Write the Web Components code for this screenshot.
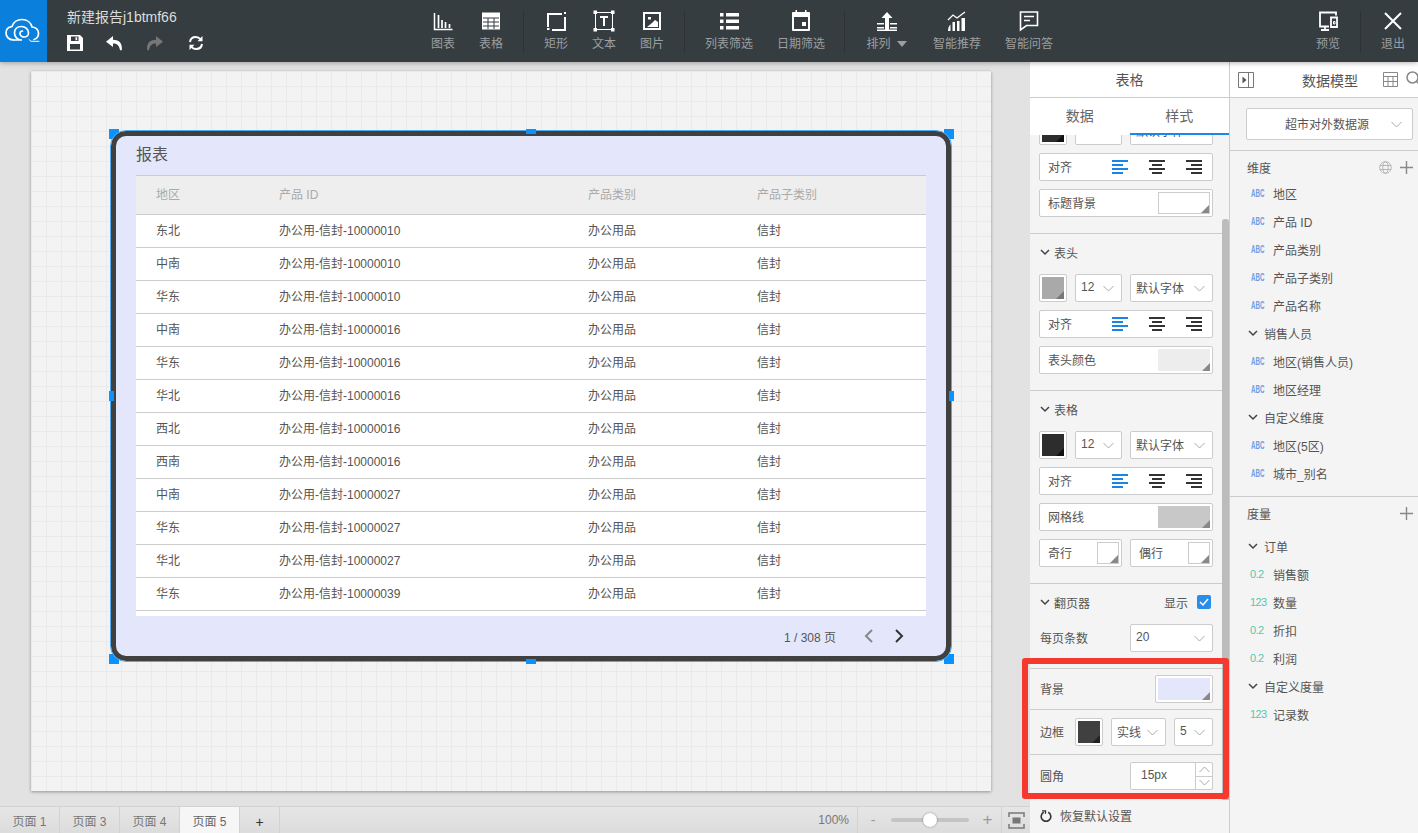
<!DOCTYPE html>
<html lang="zh">
<head>
<meta charset="utf-8">
<title>新建报告</title>
<style>
    html, body { margin: 0; height: 100%; overflow: hidden; }
    body {
        font-family: "Liberation Sans", "Noto Sans CJK SC", sans-serif;
        font-size: 12px;
        color: #555;
    }
</style>
</head>
<body>
<rp-app></rp-app>

<script>
const ICONS = {
    logo: `<svg width="47" height="62" viewBox="0 0 47 62" fill="none" stroke="#fff" stroke-width="1.7" stroke-linecap="round"><path d="M14 40C9 40 6 37 6 33 6 29.500 8.500 27 12 26.500 13.500 22 17.500 19.500 22 19.500 27 19.500 31 22.500 32 27 36 27.500 38.500 30 38.500 33.500 38.500 36 37 38.500 34 39.500"/><path d="M14 40h8C17 40 14.500 36.500 14.500 33 14.500 29 17.500 26.500 21.500 26.500 25.500 26.500 28.500 29.500 28.500 33 28.500 35.500 26.500 37 24.500 37 22 37 20 35.500 20 33.500 20 32 21 31 22.500 31"/><path d="M29 39.500l2 1.800h8" stroke-width="1"/></svg>`,
    save: `<svg width="16" height="16" viewBox="0 0 16 16"><path fill="#fff" fill-rule="evenodd" d="M0 0h13l3 3v13H0zM4 1.500v4.500h7.500V1.500zM8.500 2.300h1.700v3H8.500zM3 9v5.500h10V9z"/></svg>`,
    undo: `<svg width="16" height="16" viewBox="0 0 16 16"><path fill="currentColor" d="M7 1L0 6.800 7 12V8.500c4 0 6 1.500 7 6.500.4.400 1.500.4 1.800 0C16.500 8 13 4.700 7 4.700z"/></svg>`,
    redo: `<svg width="16" height="16" viewBox="0 0 16 16"><path fill="currentColor" d="M9 1l7 5.800L9 12V8.500c-4 0-6 1.500-7 6.500-.4.400-1.500.4-1.800 0C-.5 8 3 4.700 9 4.700z"/></svg>`,
    refresh: `<svg width="16" height="16" viewBox="0 0 16 16" fill="none" stroke="#fff" stroke-width="2"><path d="M2 7c.4-3 2.800-5 5.800-5 1.900 0 3.500.8 4.700 2.200"/><path d="M14 9c-.4 3-2.800 5-5.800 5-1.900 0-3.500-.8-4.700-2.200"/><path d="M14.500 1v5.200H9.500L14.500 1zM1.500 15V9.800h5L1.500 15z" fill="#fff" stroke="none"/></svg>`,
    chart: `<svg width="24" height="24" viewBox="0 0 24 24" fill="none" stroke="#fff"><path d="M3.500 4v16.500h18" stroke-width="1.500"/><path d="M7.500 6v13M11 11v8M14.500 13v6M18.500 15v4" stroke-width="1.700"/></svg>`,
    table: `<svg width="24" height="24" viewBox="0 0 24 24"><path fill="#fff" d="M3 3.500h18v17H3z"/><path stroke="#363d40" d="M4 9h16M4 13h16M4 17h16M9 9v11M15 9v11" fill="none"/></svg>`,
    rect: `<svg width="24" height="24" viewBox="0 0 24 24" fill="none" stroke="#fff" stroke-width="2"><path d="M4 18V5h14M21 8v13H8M3 20h2.500M20 4h2"/></svg>`,
    text: `<svg width="24" height="24" viewBox="0 0 24 24" fill="none" stroke="#fff"><path d="M3.500 3.500h17v17h-17z"/><path d="M1.500 1.500h3.500v3.500H1.500zM19 1.500h3.500v3.500H19zM1.500 19h3.500v3.500H1.500zM19 19h3.500v3.500H19z" fill="#fff" stroke="none"/><path d="M8 8h8M12 8v9" stroke-width="2"/></svg>`,
    image: `<svg width="24" height="24" viewBox="0 0 24 24"><path fill="#fff" fill-rule="evenodd" d="M3 3h18v18H3zM5 5v14h14V5z"/><path fill="#fff" d="M7 18l5-4 3-3 3 2v5z"/><path fill="#fff" d="M8 8h3v2.500H8z"/></svg>`,
    list: `<svg width="24" height="24" viewBox="0 0 24 24" fill="#fff"><path d="M3 4h3.500v3.500H3zM9 4h13v3.500H9zM3 10.500h3.500V14H3zM9 10.500h13V14H9zM3 17h3.500v3.500H3zM9 17h13v3.500H9z"/></svg>`,
    date: `<svg width="24" height="24" viewBox="0 0 24 24"><path fill="#fff" fill-rule="evenodd" d="M4 3h2.500V1H8v2h8V1h1.500v2H20a1 1 0 0 1 1 1v17a1 1 0 0 1-1 1H4a1 1 0 0 1-1-1V4a1 1 0 0 1 1-1zM5 8v12h14V8z"/><path fill="#fff" d="M13 13h4v4h-4z"/></svg>`,
    sort: `<svg width="24" height="24" viewBox="0 0 24 24" fill="#fff"><path d="M12 3l5.500 6H14v4h-4V9H6.500z"/><path d="M2 14h7v1.500H2zM15 14h7v1.500h-7zM2 18h7v1.500H2zM15 18h7v1.500h-7zM10 13h4v8h-4zM2 20.500h20V22H2z"/></svg>`,
    recommend: `<svg width="24" height="24" viewBox="0 0 24 24"><path d="M3 11l5-5 4 3 8-6" fill="none" stroke="#fff" stroke-width="1.300"/><path fill="#fff" d="M3 22c0-3 .8-5 2.500-6.500V22zM7.500 22v-9H10v9zM12 22v-10h2.500v10zM16.500 22V9H20v13z"/></svg>`,
    qa: `<svg width="24" height="24" viewBox="0 0 24 24" fill="none" stroke="#fff" stroke-width="1.600"><path d="M3.500 3h17v13.500H9.500l-6 4.500z"/><path d="M7 7.500h10M7 11.500h6"/></svg>`,
    preview: `<svg width="24" height="24" viewBox="0 0 24 24" fill="none" stroke="#fff" stroke-width="1.800"><path d="M13 17.500H4V3.500h16v3"/><path d="M5 21h8M9 17.500V21"/><path d="M15 8.500h6v9.500h-6z"/><path d="M17.500 12.500h1.500v2.500h-1.500z" stroke-width="1"/></svg>`,
    close: `<svg width="24" height="24" viewBox="0 0 24 24" fill="none" stroke="#fff" stroke-width="2"><path d="M4 4l16 16M20 4L4 20"/></svg>`,
    chevron: `<svg width="11" height="7" viewBox="0 0 11 7" fill="none" stroke="#aaa"><path d="M.5 1l5 5 5-5"/></svg>`,
    chevronBold: `<svg width="10" height="7" viewBox="0 0 10 7" fill="none" stroke="#444" stroke-width="1.500"><path d="M1 1l4 4 4-4"/></svg>`,
    left: `<svg width="16" height="16" viewBox="0 0 16 16" fill="none" stroke="#888" stroke-width="2"><path d="M11 2L5 8l6 6"/></svg>`,
    right: `<svg width="16" height="16" viewBox="0 0 16 16" fill="none" stroke="#333" stroke-width="2"><path d="M5 2l6 6-6 6"/></svg>`,
    collapse: `<svg width="16" height="16" viewBox="0 0 16 16" fill="none" stroke="#777"><path d="M.5.500h15v15H.5zM10.500.500v15"/><path d="M4.500 4.500L8.500 8l-4 3.500z" fill="#555" stroke="none"/></svg>`,
    grid: `<svg width="15" height="15" viewBox="0 0 15 15" fill="none" stroke="#888"><path d="M.5.500h14v14H.5zM.5 4.500h14M.5 9.500h14M5 4.500v10M10 4.500v10"/></svg>`,
    search: `<svg width="18" height="18" viewBox="0 0 18 18" fill="none" stroke="#888" stroke-width="1.500"><circle cx="6.500" cy="6.500" r="5.500"/><path d="M10.500 10.500l5 5"/></svg>`,
    globe: `<svg width="13" height="13" viewBox="0 0 13 13" fill="none" stroke="#aaa" stroke-width=".8"><circle cx="6.500" cy="6.500" r="5.800"/><ellipse cx="6.500" cy="6.500" rx="2.700" ry="5.800"/><path d="M1 4.500h11M1 8.500h11"/></svg>`,
    plus: `<svg width="13" height="13" viewBox="0 0 13 13" fill="none" stroke="#888" stroke-width="1.400"><path d="M6.500 0v13M0 6.500h13"/></svg>`,
    reset: `<svg width="12" height="12" viewBox="0 0 12 12" fill="none" stroke="#333" stroke-width="1.600"><path d="M3.800 2.300A4.800 4.800 0 1 0 8.200 2.300"/><path d="M2 .8h3.500v3" stroke-width="1.300"/></svg>`,
    fit: `<svg width="17" height="17" viewBox="0 0 17 17" fill="none" stroke="#777" stroke-width="1.500"><path d="M1 5V1h15v4M1 12v4h15v-4"/><path d="M4.500 5.500h8v6h-8z" fill="#777" stroke="none"/></svg>`,
};

class RpIcon extends HTMLElement {
    static get observedAttributes() {
        return ["name"];
    }

    constructor() {
        super();
        this.attachShadow({ mode: "open" });
    }

    connectedCallback() {
        this.render();
    }

    attributeChangedCallback() {
        this.render();
    }

    render() {
        const name = this.getAttribute("name");
        this.shadowRoot.innerHTML = `
            <style>
                :host { display: inline-flex; align-items: center; justify-content: center; flex: none; }
                svg { display: block; }
            </style>
            ${ICONS[name] || ""}
        `;
    }
}

class RpTool extends HTMLElement {
    constructor() {
        super();
        this.attachShadow({ mode: "open" });
        this.shadowRoot.innerHTML = `
            <style>
                :host {
                    display: flex;
                    flex-direction: column;
                    align-items: center;
                    width: 48px;
                    height: 62px;
                    padding-top: 9px;
                    box-sizing: border-box;
                    color: #9b9fa1;
                    font-size: 12px;
                    line-height: 16px;
                    flex: none;
                }
                .label { margin-top: 3px; white-space: nowrap; }
            </style>
            <rp-icon name="${this.getAttribute("icon")}"></rp-icon>
            <div class="label"><slot></slot></div>
        `;
    }
}

class RpToolbar extends HTMLElement {
    constructor() {
        super();
        this.attachShadow({ mode: "open" });
        this.shadowRoot.innerHTML = `
            <style>
                :host {
                    display: flex;
                    height: 62px;
                    background: #363d40;
                    box-shadow: 0 1px 5px rgba(0, 0, 0, 0.3);
                    position: relative;
                    z-index: 3;
                    flex: none;
                }
                .logo { width: 47px; background: #0a7fdc; flex: none; }
                .doc { width: 352px; padding: 8px 0 0 20px; flex: none; }
                .title { color: #ddd; font-size: 14px; line-height: 18px; }
                .actions { display: flex; gap: 25px; margin-top: 9px; color: #fff; }
                .actions .save { margin-right: -2px; }
                .actions .off { color: #777; }
                .sep { width: 1px; height: 42px; margin: 11px 8px 0; background: #2c3235; flex: none; }
                .sep.tight { margin: 11px 7px 0; }
                .w72 { width: 72px; }
                .w69 { width: 69px; }
                .end { margin-left: auto; display: flex; padding-right: 1px; }
                .caret { display: inline-block; margin-left: 6px; border: 5px solid transparent; border-top: 6px solid #9b9fa1; border-bottom: 0; vertical-align: 1px; }
            </style>
            <rp-icon class="logo" name="logo"></rp-icon>
            <div class="doc">
                <div class="title">新建报告j1btmf66</div>
                <div class="actions">
                    <rp-icon class="save" name="save"></rp-icon>
                    <rp-icon name="undo"></rp-icon>
                    <rp-icon class="off" name="redo"></rp-icon>
                    <rp-icon name="refresh"></rp-icon>
                </div>
            </div>
            <rp-tool icon="chart">图表</rp-tool>
            <rp-tool icon="table">表格</rp-tool>
            <div class="sep"></div>
            <rp-tool icon="rect">矩形</rp-tool>
            <rp-tool icon="text">文本</rp-tool>
            <rp-tool icon="image">图片</rp-tool>
            <div class="sep"></div>
            <rp-tool class="w72" icon="list">列表筛选</rp-tool>
            <rp-tool class="w72" icon="date">日期筛选</rp-tool>
            <div class="sep tight"></div>
            <rp-tool class="w69" icon="sort">排列<span class="caret"></span></rp-tool>
            <rp-tool class="w72" icon="recommend">智能推荐</rp-tool>
            <rp-tool class="w72" icon="qa">智能问答</rp-tool>
            <div class="end">
                <rp-tool icon="preview">预览</rp-tool>
                <div class="sep"></div>
                <rp-tool icon="close">退出</rp-tool>
            </div>
        `;
    }
}

const REPORT_ROWS = [
    ["东北", "10000010"], ["中南", "10000010"], ["华东", "10000010"], ["中南", "10000016"],
    ["华东", "10000016"], ["华北", "10000016"], ["西北", "10000016"], ["西南", "10000016"],
    ["中南", "10000027"], ["华东", "10000027"], ["华北", "10000027"], ["华东", "10000039"],
];

class RpReport extends HTMLElement {
    constructor() {
        super();
        this.attachShadow({ mode: "open" });
        const rows = REPORT_ROWS.map(
            ([area, id]) => `
                <div class="row">
                    <span>${area}</span>
                    <span>办公用-信封-${id}</span>
                    <span>办公用品</span>
                    <span>信封</span>
                </div>`
        ).join("");
        this.shadowRoot.innerHTML = `
            <style>
                :host {
                    display: flex;
                    flex-direction: column;
                    box-sizing: border-box;
                    width: 840px;
                    height: 530px;
                    padding: 0 20px;
                    background: #e4e7fb;
                    border: 5px solid #404040;
                    border-radius: 15px;
                    outline: 1px solid #55a9ee;
                }
                .title { height: 39px; line-height: 38px; font-size: 16px; color: #555; flex: none; }
                .table { height: 441px; background: #fff; border-top: 1px solid #ccc; box-sizing: border-box; overflow: hidden; flex: none; }
                .row, .head {
                    display: grid;
                    grid-template-columns: 123px 309px 169px 1fr;
                    height: 33px;
                    line-height: 32px;
                    padding-left: 20px;
                    border-bottom: 1px solid #ccc;
                    box-sizing: border-box;
                    color: #555;
                }
                .head { height: 39px; line-height: 38px; background: #eee; color: #aaa; }
                .pager { flex: 1; display: flex; align-items: center; justify-content: flex-end; color: #555; padding-right: 19px; }
                .pager .count { margin-right: 25px; }
                .pager rp-icon + rp-icon { margin-left: 14px; }
            </style>
            <div class="title">报表</div>
            <div class="table">
                <div class="head">
                    <span>地区</span><span>产品 ID</span><span>产品类别</span><span>产品子类别</span>
                </div>
                ${rows}
            </div>
            <div class="pager">
                <span class="count">1 / 308 页</span>
                <rp-icon name="left"></rp-icon>
                <rp-icon name="right"></rp-icon>
            </div>
        `;
    }
}

class RpCanvas extends HTMLElement {
    constructor() {
        super();
        this.attachShadow({ mode: "open" });
        this.shadowRoot.innerHTML = `
            <style>
                :host {
                    display: block;
                    width: 960px;
                    height: 720px;
                    position: relative;
                    background-color: #f3f3f3;
                    background-image:
                        linear-gradient(#eaeaea 1px, transparent 1px),
                        linear-gradient(90deg, #eaeaea 1px, transparent 1px);
                    background-size: 15px 15px;
                    box-shadow: 0 1px 3px rgba(0, 0, 0, 0.35);
                }
                .handle { position: absolute; width: 10px; height: 10px; background: #0a93ff; }
                .handle.h { height: 5px; }
                .handle.v { width: 5px; }
                rp-report { position: absolute; left: 80px; top: 60px; }
            </style>
            <div class="handle" style="left:78px;top:58px"></div>
            <div class="handle" style="left:913px;top:58px"></div>
            <div class="handle" style="left:78px;top:583px"></div>
            <div class="handle" style="left:913px;top:583px"></div>
            <rp-report></rp-report>
            <div class="handle h" style="left:495px;top:58px"></div>
            <div class="handle h" style="left:495px;top:588px"></div>
            <div class="handle v" style="left:78px;top:320px"></div>
            <div class="handle v" style="left:918px;top:320px"></div>
        `;
    }
}

class RpPageBar extends HTMLElement {
    constructor() {
        super();
        this.attachShadow({ mode: "open" });
        this.shadowRoot.innerHTML = `
            <style>
                :host {
                    display: flex;
                    height: 27px;
                    box-sizing: border-box;
                    border-top: 1px solid #d2d2d2;
                    background: linear-gradient(#e6e6e6, #dcdcdc);
                    color: #777;
                    flex: none;
                }
                .tab { width: 60px; box-sizing: border-box; border-right: 1px solid #d2d2d2; text-align: center; line-height: 31px; }
                .tab:first-child { width: 59px; }
                .tab.on { background: #f6f6f6; color: #666; }
                .tab.add { width: 40px; color: #333; font-size: 14px; }
                .zoom { margin-left: auto; display: flex; align-items: center; height: 100%; }
                .pct { width: 57px; padding-right: 8px; box-sizing: border-box; text-align: right; border-right: 1px solid #d2d2d2; line-height: 26px; }
                .minus { width: 33px; padding-right: 3px; box-sizing: border-box; text-align: center; color: #999; font-size: 14px; }
                .slider { width: 78px; height: 4px; background: #c4c4c4; border-radius: 2px; position: relative; }
                .slider i { position: absolute; left: 32px; top: -5px; width: 14px; height: 14px; background: #fff; border-radius: 50%; box-shadow: 0 0 2px rgba(0,0,0,.45); }
                .plus { width: 33px; padding-left: 5px; text-align: center; color: #999; font-size: 17px; border-right: 1px solid #d2d2d2; line-height: 26px; box-sizing: border-box; }
                rp-icon { width: 28px; }
            </style>
            <div class="tab">页面 1</div>
            <div class="tab">页面 3</div>
            <div class="tab">页面 4</div>
            <div class="tab on">页面 5</div>
            <div class="tab add">+</div>
            <div class="zoom">
                <div class="pct">100%</div>
                <div class="minus">-</div>
                <div class="slider"><i></i></div>
                <div class="plus">+</div>
                <rp-icon name="fit"></rp-icon>
            </div>
        `;
    }
}

// box with a border, used by every control in the side panels
const BOX_CSS = `
    box-sizing: border-box;
    height: 28px;
    background: #fff;
    border: 1px solid #ccc;
    border-radius: 2px;
`;

class RpSelect extends HTMLElement {
    constructor() {
        super();
        this.attachShadow({ mode: "open" });
        this.shadowRoot.innerHTML = `
            <style>
                :host {
                    ${BOX_CSS}
                    display: flex;
                    align-items: center;
                    justify-content: space-between;
                    padding: 0 7px 0 5px;
                    color: #555;
                    font-size: 12px;
                }
                span { position: relative; top: -1px; white-space: nowrap; }
            </style>
            <span><slot></slot></span>
            <rp-icon name="chevron"></rp-icon>
        `;
    }
}

class RpSwatch extends HTMLElement {
    constructor() {
        super();
        this.attachShadow({ mode: "open" });
        const color = this.getAttribute("color") || "#fff";
        const corner = this.getAttribute("corner") || "#888";
        this.shadowRoot.innerHTML = `
            <style>
                :host { display: block; box-sizing: border-box; position: relative; flex: none; }
                .fill { position: absolute; inset: 0; background: ${color}; box-sizing: border-box; }
                :host([outlined]) .fill { border: 1px solid #ccc; }
                .fill::after {
                    content: "";
                    position: absolute;
                    right: 0;
                    bottom: 0;
                    border-style: solid;
                    border-width: 0 0 8px 8px;
                    border-color: transparent transparent ${corner} transparent;
                }
            </style>
            <div class="fill"></div>
        `;
    }
}

// square colour button, the small one next to the size selects
class RpColorButton extends HTMLElement {
    constructor() {
        super();
        this.attachShadow({ mode: "open" });
        const color = this.getAttribute("color");
        this.shadowRoot.innerHTML = `
            <style>
                :host { ${BOX_CSS} display: block; width: 28px; padding: 2px; flex: none; }
                rp-swatch { width: 100%; height: 100%; }
            </style>
            <rp-swatch color="${color}" corner="${this.getAttribute("corner") || "#222"}"></rp-swatch>
        `;
    }
}

// label on the left, colour box filling the right end
class RpColorRow extends HTMLElement {
    constructor() {
        super();
        this.attachShadow({ mode: "open" });
        const width = this.getAttribute("swatch-width") || "52";
        const outlined = this.hasAttribute("outlined") ? "outlined" : "";
        this.shadowRoot.innerHTML = `
            <style>
                :host {
                    ${BOX_CSS}
                    display: flex;
                    align-items: center;
                    justify-content: space-between;
                    padding: 2px 2px 2px 8px;
                    color: #555;
                }
                span { position: relative; top: -1px; }
                rp-swatch { width: ${width}px; height: 22px; }
            </style>
            <span><slot></slot></span>
            <rp-swatch color="${this.getAttribute("color")}" ${outlined}></rp-swatch>
        `;
    }
}

class RpAlignRow extends HTMLElement {
    constructor() {
        super();
        this.attachShadow({ mode: "open" });
        this.shadowRoot.innerHTML = `
            <style>
                :host {
                    ${BOX_CSS}
                    display: flex;
                    align-items: center;
                    padding-left: 8px;
                    color: #555;
                }
                span { position: relative; top: -1px; }
                svg { display: block; margin-left: 21px; }
                svg:first-of-type { margin-left: 40px; }
            </style>
            <span>对齐</span>
            <svg width="16" height="14" viewBox="0 0 16 14" stroke="#1a84e4" stroke-width="1.800" fill="none"><path d="M0 1h16M0 5h11M0 9h16M0 13h11"/></svg>
            <svg width="16" height="14" viewBox="0 0 16 14" stroke="#333" stroke-width="1.800" fill="none"><path d="M0 1h16M3 5h10M0 9h16M3 13h10"/></svg>
            <svg width="16" height="14" viewBox="0 0 16 14" stroke="#333" stroke-width="1.800" fill="none"><path d="M0 1h16M5 5h11M0 9h16M5 13h11"/></svg>
        `;
    }
}

class RpStepper extends HTMLElement {
    constructor() {
        super();
        this.attachShadow({ mode: "open" });
        this.shadowRoot.innerHTML = `
            <style>
                :host {
                    ${BOX_CSS}
                    display: flex;
                    align-items: center;
                    width: 83px;
                    padding-left: 10px;
                    color: #555;
                }
                .value { flex: 1; position: relative; top: -1px; }
                .btns { width: 16px; height: 100%; border-left: 1px solid #ccc; display: flex; flex-direction: column; }
                .btns div { flex: 1; display: flex; align-items: center; justify-content: center; }
                .btns div + div { border-top: 1px solid #ccc; }
                .up { transform: scaleY(-1); }
            </style>
            <span class="value"><slot></slot></span>
            <div class="btns">
                <div><rp-icon class="up" name="chevron"></rp-icon></div>
                <div><rp-icon name="chevron"></rp-icon></div>
            </div>
        `;
    }
}

// collapsible head of a panel section
class RpSectionHead extends HTMLElement {
    constructor() {
        super();
        this.attachShadow({ mode: "open" });
        this.shadowRoot.innerHTML = `
            <style>
                :host { display: flex; align-items: center; box-sizing: border-box; height: 40px; padding: 0 0 4px 1px; color: #555; gap: 4px; }
                .end { margin-left: auto; display: flex; align-items: center; gap: 9px; padding-right: 2px; }
            </style>
            <rp-icon name="chevronBold"></rp-icon>
            <span><slot></slot></span>
            <div class="end"><slot name="end"></slot></div>
        `;
    }
}

class RpStylePanel extends HTMLElement {
    constructor() {
        super();
        this.attachShadow({ mode: "open" });
        const fontRow = (color, corner) => `
            <div class="line">
                <rp-color-button color="${color}" corner="${corner}"></rp-color-button>
                <rp-select class="size">12</rp-select>
                <rp-select class="font">默认字体</rp-select>
            </div>`;
        this.shadowRoot.innerHTML = `
            <style>
                :host {
                    display: flex;
                    flex-direction: column;
                    width: 199px;
                    background: #f4f4f4;
                    position: relative;
                    flex: none;
                }
                .title { height: 36px; line-height: 37px; box-sizing: border-box; background: #fff; border-bottom: 1px solid #ccc; text-align: center; font-size: 14px; color: #555; flex: none; }
                .tabs { display: flex; height: 37px; background: #fff; position: relative; z-index: 1; flex: none; }
                .tabs div { flex: 1; text-align: center; line-height: 37px; font-size: 14px; color: #666; box-sizing: border-box; height: 37px; }
                .tabs .on { border-bottom: 2px solid #1a88e8; }
                .scroll { flex: 1; overflow: hidden; min-height: 0; }
                .section { padding: 0 16px 16px 9px; border-bottom: 1px solid #ccc; display: flex; flex-direction: column; gap: 8px; }
                .section.first { margin-top: -18px; }
                rp-section-head { margin-bottom: -8px; }
                .line { display: flex; gap: 8px; align-items: center; }
                .size { width: 47px; flex: none; }
                .font { flex: 1; }
                .half { flex: 1; min-width: 0; }
                .label { color: #555; flex: 1; padding-left: 1px; position: relative; top: -1px; }
                .check { width: 14px; height: 14px; background: #2a8de8; border-radius: 2px; display: block; }
                .flat { padding: 6px 16px 6px 9px; border-bottom: 1px solid #ccc; }
                .flat.mid { padding: 8px 16px 8px 9px; }
                .flat.last { padding: 7px 16px 7px 9px; border-bottom: 0; }
                .bg { width: 58px; height: 28px; flex: none; }
                .foot { height: 33px; box-sizing: border-box; padding: 0 0 2px 10px; display: flex; align-items: center; gap: 8px; color: #555; flex: none; }
                .thumb { position: absolute; right: 0; top: 157px; width: 7px; height: 581px; background: #bcbcbc; border-radius: 3px 3px 0 0; }
                .mark { position: absolute; left: -8px; top: 596px; width: 207px; height: 141px; box-sizing: border-box; border: 6px solid #f5392f; border-radius: 3px; pointer-events: none; }
            </style>
            <div class="title">表格</div>
            <div class="tabs">
                <div>数据</div>
                <div class="on">样式</div>
            </div>
            <div class="scroll">
                <div class="section first">
                    ${fontRow("#2d2d2d", "#111")}
                    <rp-align-row></rp-align-row>
                    <rp-color-row color="#fff" outlined>标题背景</rp-color-row>
                </div>
                <div class="section">
                    <rp-section-head>表头</rp-section-head>
                    ${fontRow("#a9a9a9", "#777")}
                    <rp-align-row></rp-align-row>
                    <rp-color-row color="#ededed">表头颜色</rp-color-row>
                </div>
                <div class="section">
                    <rp-section-head>表格</rp-section-head>
                    ${fontRow("#2d2d2d", "#111")}
                    <rp-align-row></rp-align-row>
                    <rp-color-row color="#c8c8c8">网格线</rp-color-row>
                    <div class="line">
                        <rp-color-row class="half" color="#fff" swatch-width="22" outlined>奇行</rp-color-row>
                        <rp-color-row class="half" color="#fff" swatch-width="22" outlined>偶行</rp-color-row>
                    </div>
                </div>
                <div class="section">
                    <rp-section-head>
                        翻页器
                        <span slot="end">显示</span>
                        <svg slot="end" class="check" viewBox="0 0 14 14" fill="none" stroke="#fff" stroke-width="1.500"><path d="M3 7l3 3 5-6"/></svg>
                    </rp-section-head>
                    <div class="line">
                        <span class="label">每页条数</span>
                        <rp-select style="width:83px">20</rp-select>
                    </div>
                </div>
                <div class="flat line">
                    <span class="label">背景</span>
                    <rp-color-row class="bg" style="padding:2px" color="#e4e7fb" swatch-width="52"></rp-color-row>
                </div>
                <div class="flat mid line">
                    <span class="label" style="flex:none;width:27px">边框</span>
                    <rp-color-button color="#404040" corner="#222"></rp-color-button>
                    <rp-select style="width:55px;flex:none">实线</rp-select>
                    <rp-select style="width:39px;flex:none">5</rp-select>
                </div>
                <div class="flat last line">
                    <span class="label">圆角</span>
                    <rp-stepper>15px</rp-stepper>
                </div>
            </div>
            <div class="foot">
                <rp-icon name="reset"></rp-icon>
                <span>恢复默认设置</span>
            </div>
            <div class="thumb"></div>
            <div class="mark"></div>
        `;
    }
}

class RpField extends HTMLElement {
    constructor() {
        super();
        this.attachShadow({ mode: "open" });
        const type = this.getAttribute("type") || "ABC";
        this.shadowRoot.innerHTML = `
            <style>
                :host { display: flex; align-items: center; height: 28px; color: #555; }
                .type { display: block; width: 43px; padding-left: 21px; box-sizing: border-box; flex: none; white-space: nowrap; }
                .ABC { color: #6c9fe4; font-size: 10px; font-weight: bold; transform: scaleX(.62); transform-origin: 21px 50%; }
                .num { color: #55c8ae; font-size: 11px; letter-spacing: -.6px; padding-left: 20px; }
            </style>
            <span class="type ${type === "ABC" ? "ABC" : "num"}">${type}</span>
            <span><slot></slot></span>
        `;
    }
}

class RpFieldGroup extends HTMLElement {
    constructor() {
        super();
        this.attachShadow({ mode: "open" });
        this.shadowRoot.innerHTML = `
            <style>
                :host { display: flex; align-items: center; gap: 6px; height: 28px; padding-left: 18px; color: #555; }
            </style>
            <rp-icon name="chevronBold"></rp-icon>
            <span><slot></slot></span>
        `;
    }
}

class RpDataPanel extends HTMLElement {
    constructor() {
        super();
        this.attachShadow({ mode: "open" });
        this.shadowRoot.innerHTML = `
            <style>
                :host {
                    display: flex;
                    flex-direction: column;
                    flex: 1;
                    min-width: 0;
                    background: #f4f4f4;
                    border-left: 1px solid #ccc;
                    overflow: hidden;
                }
                .top { display: flex; align-items: center; height: 36px; box-sizing: border-box; background: #fff; border-bottom: 1px solid #ccc; padding-left: 8px; flex: none; white-space: nowrap; }
                .top .name { margin: 1px 25px 0 48px; font-size: 14px; color: #555; }
                .top rp-icon + rp-icon { margin-left: 8px; }
                .source { padding: 10px 5px 10px 16px; border-bottom: 1px solid #ccc; flex: none; }
                .source rp-select { height: 32px; padding: 0 10px 0 38px; }
                .head { display: flex; align-items: center; height: 28px; padding: 4px 5px 0 17px; box-sizing: border-box; color: #555; gap: 8px; }
                .head span { flex: 1; }
                .block { padding-bottom: 9px; border-bottom: 1px solid #ccc; }
                .head.two { height: 35px; padding: 0 5px 2px 17px; }
            </style>
            <div class="top">
                <rp-icon name="collapse"></rp-icon>
                <div class="name">数据模型</div>
                <rp-icon name="grid"></rp-icon>
                <rp-icon name="search"></rp-icon>
            </div>
            <div class="source">
                <rp-select>超市对外数据源</rp-select>
            </div>
            <div class="block">
                <div class="head">
                    <span>维度</span>
                    <rp-icon name="globe"></rp-icon>
                    <rp-icon name="plus"></rp-icon>
                </div>
                <rp-field>地区</rp-field>
                <rp-field>产品 ID</rp-field>
                <rp-field>产品类别</rp-field>
                <rp-field>产品子类别</rp-field>
                <rp-field>产品名称</rp-field>
                <rp-field-group>销售人员</rp-field-group>
                <rp-field>地区(销售人员)</rp-field>
                <rp-field>地区经理</rp-field>
                <rp-field-group>自定义维度</rp-field-group>
                <rp-field>地区(5区)</rp-field>
                <rp-field>城市_别名</rp-field>
            </div>
            <div>
                <div class="head two">
                    <span>度量</span>
                    <rp-icon name="plus"></rp-icon>
                </div>
                <rp-field-group>订单</rp-field-group>
                <rp-field type="0.2">销售额</rp-field>
                <rp-field type="123">数量</rp-field>
                <rp-field type="0.2">折扣</rp-field>
                <rp-field type="0.2">利润</rp-field>
                <rp-field-group>自定义度量</rp-field-group>
                <rp-field type="123">记录数</rp-field>
            </div>
        `;
    }
}

class RpApp extends HTMLElement {
    constructor() {
        super();
        this.attachShadow({ mode: "open" });
        this.shadowRoot.innerHTML = `
            <style>
                :host { display: flex; flex-direction: column; width: 1418px; height: 833px; overflow: hidden; }
                .main { flex: 1; display: flex; min-height: 0; }
                .work { width: 1030px; display: flex; flex-direction: column; background: #e2e2e2; flex: none; }
                .stage { flex: 1; padding: 9px 39px 0 31px; min-height: 0; }
            </style>
            <rp-toolbar></rp-toolbar>
            <div class="main">
                <div class="work">
                    <div class="stage"><rp-canvas></rp-canvas></div>
                    <rp-page-bar></rp-page-bar>
                </div>
                <rp-style-panel></rp-style-panel>
                <rp-data-panel></rp-data-panel>
            </div>
        `;
    }
}

customElements.define("rp-icon", RpIcon);
customElements.define("rp-tool", RpTool);
customElements.define("rp-toolbar", RpToolbar);
customElements.define("rp-report", RpReport);
customElements.define("rp-canvas", RpCanvas);
customElements.define("rp-page-bar", RpPageBar);
customElements.define("rp-select", RpSelect);
customElements.define("rp-swatch", RpSwatch);
customElements.define("rp-color-button", RpColorButton);
customElements.define("rp-color-row", RpColorRow);
customElements.define("rp-align-row", RpAlignRow);
customElements.define("rp-stepper", RpStepper);
customElements.define("rp-section-head", RpSectionHead);
customElements.define("rp-style-panel", RpStylePanel);
customElements.define("rp-field", RpField);
customElements.define("rp-field-group", RpFieldGroup);
customElements.define("rp-data-panel", RpDataPanel);
customElements.define("rp-app", RpApp);
</script>
</body>
</html>
